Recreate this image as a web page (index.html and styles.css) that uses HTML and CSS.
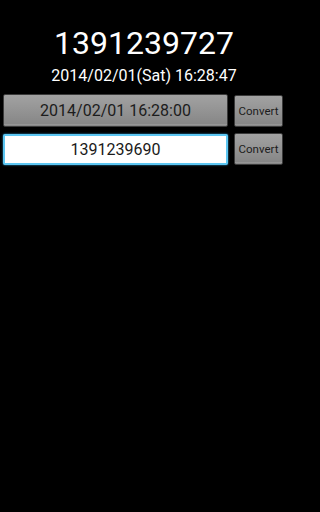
FILE: index.html
```html
<!DOCTYPE html>
<html>
<head>
<meta charset="utf-8">
<link rel="stylesheet" href="styles.css">
</head>
<body>
<div class="app">
  <div class="epoch">1391239727</div>
  <div class="date">2014/02/01(Sat) 16:28:47</div>
  <div class="row first">
    <div class="btn wide">2014/02/01 16:28:00</div>
    <div class="btn small">Convert</div>
  </div>
  <div class="row second">
    <div class="field">1391239690</div>
    <div class="btn small">Convert</div>
  </div>
</div>
</body>
</html>
```
FILE: styles.css
```css
html, body {
  margin: 0;
  padding: 0;
  background: #000;
}
.app {
  width: 288px;
  height: 512px;
  background: #000;
  font-family: Roboto, "Noto Sans", sans-serif;
  color: #fff;
  padding-top: 24px;
  box-sizing: border-box;
}
.epoch {
  font-size: 32px;
  line-height: 38px;
  text-align: center;
}
.date {
  margin-top: 4px;
  font-size: 16px;
  line-height: 19px;
  text-align: center;
}
.row {
  display: flex;
  align-items: center;
  padding-left: 3px;
  gap: 6px;
}
.row.first {
  margin-top: 9px;
}
.row.second {
  margin-top: 6px;
}
.btn {
  box-sizing: border-box;
  display: flex;
  align-items: center;
  justify-content: center;
  color: #1c1c1c;
  background: linear-gradient(#a2a2a2, #959595 45%, #878787 92%, #9a9a9a 96%, #7a7a7a);
  border: 1px solid #3a3a3a;
  border-radius: 2px;
}
.wide {
  width: 225px;
  height: 33px;
  font-size: 16px;
}
.small {
  width: 49px;
  height: 32px;
  font-size: 11.5px;
}
.field {
  box-sizing: border-box;
  width: 225px;
  height: 31px;
  display: flex;
  align-items: center;
  justify-content: center;
  background: #fff;
  color: #1a1a1a;
  font-size: 16px;
  border: 2px solid #5cc6f2;
  border-radius: 2px;
  box-shadow: 0 0 2px #3aa8e0;
}
```
